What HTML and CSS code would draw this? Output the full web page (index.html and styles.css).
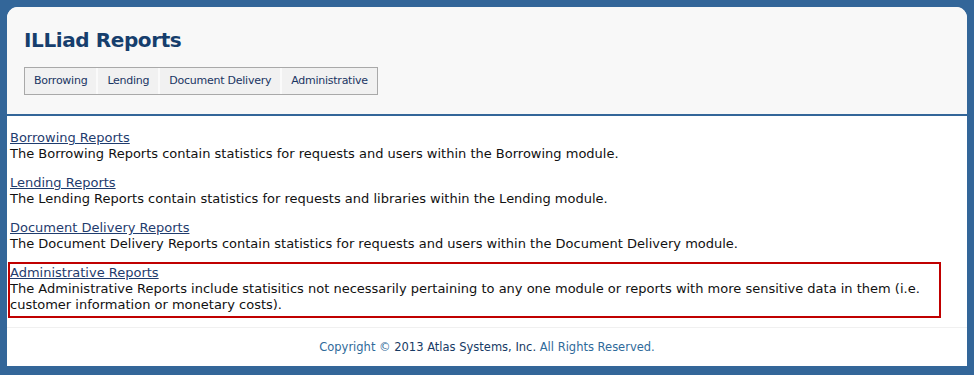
FILE: index.html
```html
<!DOCTYPE html>
<html>
<head>
<meta charset="utf-8">
<link rel="stylesheet" href="styles.css">
</head>
<body>
<div class="page">
  <header class="header">
    <h1 class="title">ILLiad Reports</h1>
    <nav class="nav">
      <a class="nav-item" href="#">Borrowing</a>
      <a class="nav-item" href="#">Lending</a>
      <a class="nav-item" href="#">Document Delivery</a>
      <a class="nav-item" href="#">Administrative</a>
    </nav>
  </header>
  <main class="content">
    <div class="report">
      <a class="report-link" href="#">Borrowing Reports</a>
      <div class="report-desc">The Borrowing Reports contain statistics for requests and users within the Borrowing module.</div>
    </div>
    <div class="report">
      <a class="report-link" href="#">Lending Reports</a>
      <div class="report-desc">The Lending Reports contain statistics for requests and libraries within the Lending module.</div>
    </div>
    <div class="report">
      <a class="report-link" href="#">Document Delivery Reports</a>
      <div class="report-desc">The Document Delivery Reports contain statistics for requests and users within the Document Delivery module.</div>
    </div>
    <div class="report report-highlight">
      <a class="report-link" href="#">Administrative Reports</a>
      <div class="report-desc">The Administrative Reports include statisitics not necessarily pertaining to any one module or reports with more sensitive data in them (i.e. customer information or monetary costs).</div>
    </div>
  </main>
  <footer class="footer">
    Copyright &copy; <span class="footer-strong">2013 Atlas Systems, Inc.</span> All Rights Reserved.
  </footer>
</div>
</body>
</html>
```
FILE: styles.css
```css
html, body {
  margin: 0;
  padding: 0;
}
body {
  background: #336699;
  padding: 7px 7px 9px 7px;
  font-family: "DejaVu Sans", Verdana, sans-serif;
  height: 375px;
  box-sizing: border-box;
}
.page {
  width: 960px;
  height: 359px;
  background: #ffffff;
  border-radius: 11px 11px 0 0;
  overflow: hidden;
  display: flex;
  flex-direction: column;
}
.header {
  background: #f8f8f8;
  height: 109px;
  border-bottom: 2px solid #336699;
  box-sizing: border-box;
  padding: 21px 0 0 17px;
}
.title {
  margin: 0;
  font-size: 20px;
  font-weight: bold;
  color: #163e6d;
  line-height: 24px;
  letter-spacing: -0.4px;
}
.nav {
  display: inline-flex;
  margin-top: 15px;
  border: 1px solid #a9a9a9;
  background: #fafafa;
  padding: 0;
}
.nav-item {
  display: block;
  background: #f1f1f1;
  color: #1a3563;
  text-decoration: none;
  font-size: 11px;
  letter-spacing: -0.25px;
  line-height: 26px;
  padding: 0 9px 0 9px;
  margin-left: 2px;
}
.nav-item:first-child {
  margin-left: 0;
}
.content {
  padding: 11px 26px 0 1px;
  flex: 1;
}
.report {
  border: 2px solid transparent;
  margin-bottom: 5px;
  padding: 1px 0 3px 0;
  font-size: 13px;
  line-height: 16px;
}
.report-link {
  display: block;
  width: max-content;
  color: #1f3c6e;
  text-decoration: underline;
}
.report-desc {
  color: #111111;
}
.report-highlight {
  border-color: #c00000;
  margin-bottom: 0;
}
.footer {
  border-top: 1px solid #f0f0f0;
  margin-top: 8px;
  height: 38px;
  text-align: center;
  font-size: 11.5px;
  line-height: 38px;
  color: #2f6a9a;
}
.footer-strong {
  color: #173a64;
}
```
